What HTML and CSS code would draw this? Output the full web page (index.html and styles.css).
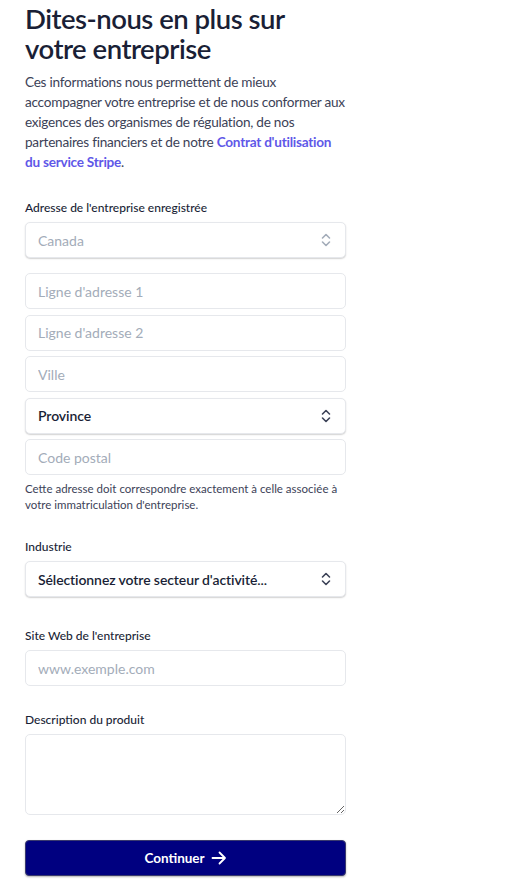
FILE: index.html
```html
<!DOCTYPE html>
<html lang="fr">
<head>
<meta charset="utf-8">
<title>Dites-nous en plus sur votre entreprise</title>
<link rel="stylesheet" href="styles.css">
</head>
<body>
<main class="page">
  <h1 class="title">Dites-nous en plus sur votre entreprise</h1>
  <p class="intro">Ces informations nous permettent de mieux accompagner votre entreprise et de nous conformer aux exigences des organismes de régulation, de nos partenaires financiers et de notre <a class="link" href="#">Contrat d'utilisation du service Stripe</a>.</p>

  <section class="group group-address">
    <label class="label">Adresse de l'entreprise enregistrée</label>
    <div class="select select-disabled">
      <span class="select-text">Canada</span>
      <svg class="chev" width="10" height="14" viewBox="0 0 10 14"><path d="M1.5 5 L5 1.5 L8.5 5 M1.5 9 L5 12.5 L8.5 9" fill="none" stroke="currentColor" stroke-width="1.6" stroke-linecap="round" stroke-linejoin="round"/></svg>
    </div>
    <div class="stack">
      <input class="field" type="text" placeholder="Ligne d'adresse 1">
      <input class="field" type="text" placeholder="Ligne d'adresse 2">
      <input class="field" type="text" placeholder="Ville">
      <div class="select">
        <span class="select-text select-value">Province</span>
        <svg class="chev" width="10" height="14" viewBox="0 0 10 14"><path d="M1.5 5 L5 1.5 L8.5 5 M1.5 9 L5 12.5 L8.5 9" fill="none" stroke="currentColor" stroke-width="1.6" stroke-linecap="round" stroke-linejoin="round"/></svg>
      </div>
      <input class="field" type="text" placeholder="Code postal">
    </div>
    <p class="help">Cette adresse doit correspondre exactement à celle associée à votre immatriculation d'entreprise.</p>
  </section>

  <section class="group group-industry">
    <label class="label">Industrie</label>
    <div class="select">
      <span class="select-text select-value">Sélectionnez votre secteur d'activité...</span>
      <svg class="chev" width="10" height="14" viewBox="0 0 10 14"><path d="M1.5 5 L5 1.5 L8.5 5 M1.5 9 L5 12.5 L8.5 9" fill="none" stroke="currentColor" stroke-width="1.6" stroke-linecap="round" stroke-linejoin="round"/></svg>
    </div>
  </section>

  <section class="group group-site">
    <label class="label">Site Web de l'entreprise</label>
    <input class="field" type="text" placeholder="www.exemple.com">
  </section>

  <section class="group">
    <label class="label">Description du produit</label>
    <textarea class="area"></textarea>
  </section>

  <button class="submit" type="button">Continuer
    <svg class="arrow" width="16" height="14" viewBox="0 0 16 14"><path d="M1.5 7 H14 M8.5 1.5 L14 7 L8.5 12.5" fill="none" stroke="currentColor" stroke-width="1.8" stroke-linecap="round" stroke-linejoin="round"/></svg>
  </button>
</main>
</body>
</html>
```

FILE: styles.css
```css
* { box-sizing: border-box; }
html, body { margin: 0; padding: 0; background: #ffffff; }
body {
  font-family: "Lato", "Noto Sans", sans-serif;
  color: #1a1f36;
}
.page {
  width: 346px;
  padding: 4px 0 9px 25px;
  display: flex;
  flex-direction: column;
}
.title {
  margin: 0;
  font-size: 27.5px;
  line-height: 30px;
  font-weight: 600;
  letter-spacing: -0.5px;
  color: #1a1f36;
}
.intro {
  margin: 8px 0 0;
  font-size: 13.6px;
  line-height: 20px;
  letter-spacing: -0.25px;
  color: #3c4257;
}
.link {
  color: #5f58e8;
  font-weight: 700;
  text-decoration: none;
}
.group {
  display: flex;
  flex-direction: column;
  margin-top: 26px;
}
.group-address { margin-top: 28px; }
.group-industry { margin-top: 26px; }
.group-site { margin-top: 31px; }
.label {
  font-size: 12px;
  line-height: 16px;
  font-weight: 500;
  color: #1a1f36;
  margin-bottom: 6px;
}
.select, .field {
  height: 36px;
  width: 100%;
  border-radius: 5px;
  background: #fff;
}
.select {
  display: flex;
  align-items: center;
  justify-content: space-between;
  padding: 0 12px 0 12px;
  border: 1px solid #e6e8ec;
  box-shadow: 0 1px 1.5px rgba(0, 0, 0, 0.18);
  color: #3c4257;
}
.select-text {
  font-size: 14px;
  color: #a3acb9;
}
.select-value {
  color: #1a1f36;
  font-weight: 600;
  letter-spacing: -0.1px;
}
.select-disabled .chev { color: #a3acb9; }
.chev { color: #3c4257; margin-right: 2px; }
.stack {
  display: flex;
  flex-direction: column;
  gap: 5.6px;
  margin-top: 15px;
}
.field {
  display: block;
  border: 1px solid #e6e8ec;
  padding: 0 12px;
  font-family: inherit;
  font-size: 14px;
  color: #1a1f36;
  outline: none;
}
.field::placeholder { color: #a3acb9; }
.help {
  margin: 6px 0 0;
  font-size: 11.5px;
  line-height: 16px;
  color: #3c4257;
}
.area {
  display: block;
  width: 100%;
  height: 81px;
  border: 1px solid #e6e8ec;
  border-radius: 5px;
  font-family: inherit;
  font-size: 13px;
  resize: vertical;
  outline: none;
}
.submit {
  margin-top: 25px;
  height: 36px;
  width: 100%;
  border: 1px solid #3a3a6e;
  border-radius: 4px;
  background: #000080;
  color: #ffffff;
  font-family: inherit;
  font-size: 13.5px;
  font-weight: 700;
  display: flex;
  align-items: center;
  justify-content: center;
  gap: 6px;
  box-shadow: 0 1px 2px rgba(0, 0, 0, 0.3);
}
.arrow { display: block; }
```
